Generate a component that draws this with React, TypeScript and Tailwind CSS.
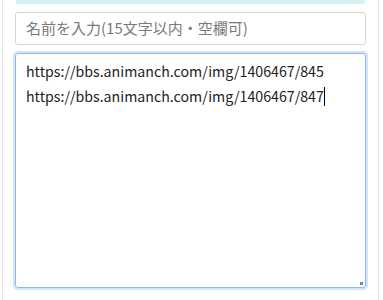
export default function App() {
  return (
    <div className="w-[383px] h-[300px] bg-white overflow-hidden">
      <div className="ml-[2px] w-[377px] h-[300px] border-x border-[#e4e4e4] px-[12px]">
        <div className="h-[4px] bg-[#d6f1f1] mx-[1px]" />
        <div className="mt-[8px] h-[33px] border border-[#d4d4d4] rounded-[3px] flex items-center px-[10px] text-[15px] text-[#7a7a7a] font-['Noto_Sans_CJK_JP',sans-serif]">
          名前を入力(15文字以内・空欄可)
        </div>
        <div className="relative mt-[8px] h-[235px] border border-[#8fb8f0] rounded-[3px] shadow-[0_0_0_2px_#d3e3fa] px-[10px] pt-[5px] text-[14.2px] leading-[25px] text-[#222] font-['Noto_Sans_CJK_JP',sans-serif]">
          <div>https://bbs.animanch.com/img/1406467/845</div>
          <div>
            https://bbs.animanch.com/img/1406467/847
            <span className="inline-block w-[1px] h-[19px] bg-black align-[-4px]" />
          </div>
          <div className="absolute right-[2px] bottom-[2px] w-[3px] h-[3px] bg-[#888]" />
        </div>
      </div>
    </div>
  )
}
